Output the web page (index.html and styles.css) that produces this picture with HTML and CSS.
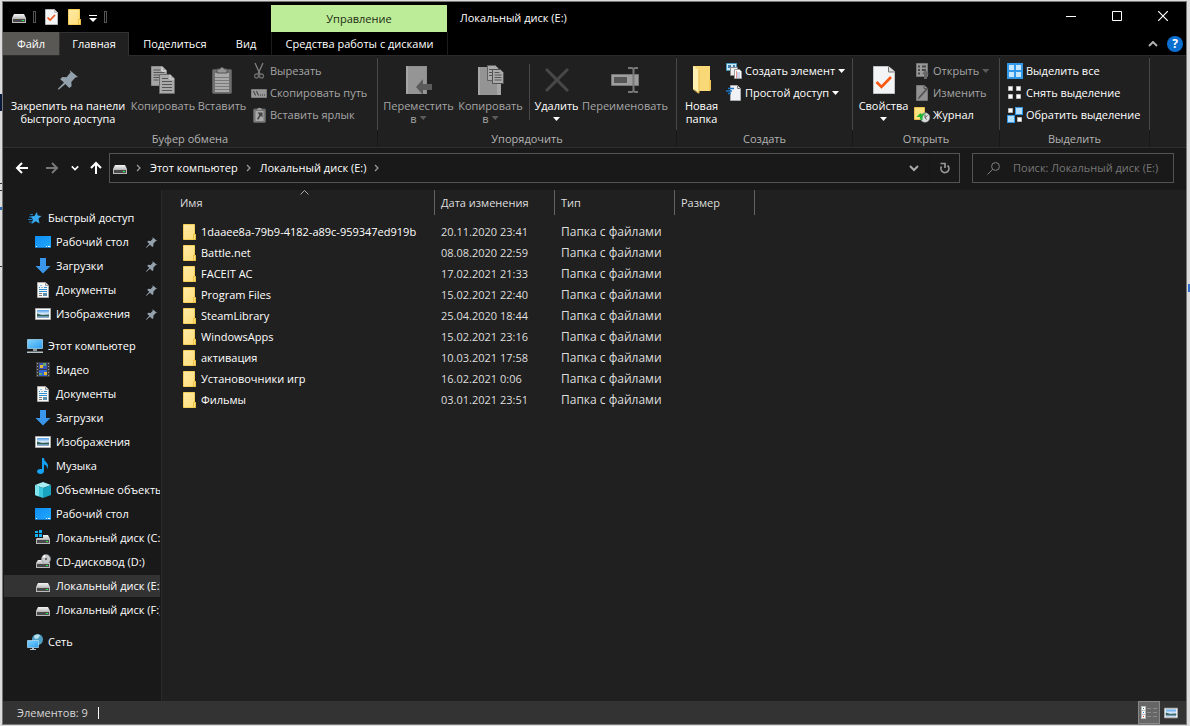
FILE: index.html
```html
<!DOCTYPE html>
<html lang="ru">
<head>
<meta charset="utf-8">
<title>Локальный диск (E:)</title>
<link rel="stylesheet" href="styles.css">
</head>
<body>
<svg class="sprite" width="0" height="0" aria-hidden="true">
  <defs>
    <linearGradient id="g-folder" x1="0" y1="0" x2="1" y2="1"><stop offset="0" stop-color="#ffeaa6"/><stop offset="1" stop-color="#ffdd78"/></linearGradient>
    <linearGradient id="g-blue" x1="0" y1="0" x2="1" y2="1"><stop offset="0" stop-color="#0f8df2"/><stop offset="1" stop-color="#22aaff"/></linearGradient>
    <linearGradient id="g-screen" x1="0" y1="0" x2="1" y2="1"><stop offset="0" stop-color="#7fd4ff"/><stop offset="1" stop-color="#2f9df0"/></linearGradient>
    <linearGradient id="g-photo" x1="0" y1="0" x2="0" y2="1"><stop offset="0" stop-color="#4d9be8"/><stop offset=".5" stop-color="#e4f1fb"/><stop offset=".75" stop-color="#5f87a8"/><stop offset="1" stop-color="#9ab7d6"/></linearGradient>
    <linearGradient id="g-metal" x1="0" y1="0" x2="0" y2="1"><stop offset="0" stop-color="#f4f4f4"/><stop offset="1" stop-color="#c4c4c4"/></linearGradient>
  </defs>
  <symbol id="i-drive" viewBox="0 0 16 16"><path d="M3 5h10l2 4H1z" fill="url(#g-metal)"/><path d="M1 9h14v5H1z" fill="#b9b9b9"/><path d="M2 10h12v3H2z" fill="#484a4c"/><path d="M11 11h2v1h-2z" fill="#2cf04a"/></symbol>
  <symbol id="i-windrive" viewBox="0 0 16 16"><path d="M0 1h3v2H0zM4 0h3v3H4zM0 4h3v3H0zM4 4h3v3H4z" fill="#13b2f5"/><path d="M8 5h5l2 4H1l1-1h6z" fill="url(#g-metal)"/><path d="M1 9h14v5H1z" fill="#b9b9b9"/><path d="M2 10h12v3H2z" fill="#484a4c"/><path d="M11 11h2v1h-2z" fill="#2cf04a"/></symbol>
  <symbol id="i-cd" viewBox="0 0 16 16"><path d="M3 6h10l2 3H1z" fill="url(#g-metal)"/><circle cx="11" cy="5" r="4.500" fill="#c5c9cb" stroke="#8f9496" stroke-width=".6"/><path d="M11 5L7.500 2.500A4.500 4.500 0 0 1 10 .8z" fill="#fff"/><circle cx="11" cy="5" r="1.400" fill="#333" stroke="#eee" stroke-width=".6"/><path d="M1 9h14v5H1z" fill="#b9b9b9"/><path d="M2 10h12v3H2z" fill="#484a4c"/><path d="M11 11h2v1h-2z" fill="#2cf04a"/></symbol>
  <symbol id="i-folder" viewBox="0 0 14 16"><path d="M.5.5h11v10h1v5H.5z" fill="url(#g-folder)" stroke="#f4cf5a"/><path d="M10.500 11.500v-1h2v5h-2z" fill="#ffe27d" stroke="#e6b93a" stroke-width=".8"/></symbol>
  <symbol id="i-props" viewBox="0 0 14 16"><path d="M.5.5h9l3 3v12H.5z" fill="#f4f5f7" stroke="#b7babd"/><path d="M9.500.5v3h3z" fill="#d4d6d9" stroke="#aaa" stroke-width=".6"/><path d="M2.500 8.500l2.600 2.600L10 6" fill="none" stroke="#f2571d" stroke-width="1.700"/></symbol>
  <symbol id="i-pin" viewBox="0 0 20 20"><path d="M11.500 0L20 7l-2.600.6-4.100 4.500.3 4.200-2.300 1.700-4-3.900L1 19.600 0 19.500l.2-1L6 12.400 2.200 9.200l2-2.200 4.300.2 4-4.600z" fill="#93a1ac"/></symbol>
  <symbol id="i-copy" viewBox="0 0 24 28"><path d="M.5.500h11l4 4v15H.5z" fill="#a5a5a5" stroke="#8c8c8c"/><path d="M11 1v4h4" fill="none" stroke="#eee"/><path d="M2.500 4h7M2.500 6.500h11M2.500 9h11M2.500 11.500h11M2.500 14h5" stroke="#555"/><path d="M8.500 8.500h11l4 4v15h-15z" fill="#aaa" stroke="#6a6a6a"/><path d="M19 9v4h4" fill="none" stroke="#ddd"/><path d="M11 12.500h6M11 15.500h10M11 18.500h10M11 21.500h10M11 24.500h10" stroke="#555"/></symbol>
  <symbol id="i-paste" viewBox="0 0 20 28"><rect x=".5" y="3.500" width="19" height="24" rx="1" fill="#707070" stroke="#5a5a5a"/><path d="M3 7h14v19H3z" fill="#aaa"/><path d="M3 11.500h14M3 14.500h14M3 17.500h14M3 20.500h14M3 23.500h14" stroke="#7a7a7a"/><path d="M5 3h3c0-2 4-2 4 0h3v4H5z" fill="#959595" stroke="#555"/></symbol>
  <symbol id="i-cut" viewBox="0 0 16 16"><path d="M4 0l5 11M12 0L7 11" stroke="#818181" stroke-width="1.300" fill="none"/><circle cx="5.500" cy="13" r="2" fill="none" stroke="#6c6c6c" stroke-width="1.300"/><circle cx="10.500" cy="13" r="2" fill="none" stroke="#6c6c6c" stroke-width="1.300"/></symbol>
  <symbol id="i-path" viewBox="0 0 16 16"><path d="M.5 4.500h15v8H.5z" fill="#989898" stroke="#7e7e7e"/><path d="M2.500 6l2 4.500M5.500 6l2 4.500M9 10h1M11 10h1M13 10h1" stroke="#333"/></symbol>
  <symbol id="i-link" viewBox="0 0 16 16"><rect x="2.500" y="2" width="12" height="13.500" rx="1" fill="#777" stroke="#5e5e5e"/><path d="M4.500 4h8v10h-8z" fill="#a9a9a9"/><path d="M6 3c0-3 5-3 5 0z" fill="#999"/><path d="M6.500 5.500h5v5l-1.700-1.700-2.500 4-1.300-.8 2.300-4z" fill="#444"/></symbol>
  <symbol id="i-moveto" viewBox="0 0 28 28"><path d="M1 0h21v28H1z" fill="#8d8d8d"/><path d="M1 0h2v28H1z" fill="#a6a6a6"/><path d="M3 1h18v27H3z" fill="#959595"/><path d="M18 13v5h9v6h-9v5l-7-8z" fill="#5b5b5b"/></symbol>
  <symbol id="i-copyto" viewBox="0 0 28 30"><path d="M1 2h19v28H1z" fill="#949494"/><path d="M1 2h2v28H1zM20 18h4v12h-4z" fill="#a6a6a6"/><path d="M10.500.500h8l3 3v12h-11z" fill="#aaa" stroke="#606060"/><path d="M12 4.500h6M12 7.500h5M12 10.500h4" stroke="#555"/><path d="M15.500 4.500h8l3 3v11h-11z" fill="#aaa" stroke="#505050"/><path d="M17.500 7.500h5M17.500 10h7M17.500 12.500h7M17.500 15h7" stroke="#555"/></symbol>
  <symbol id="i-delete" viewBox="0 0 24 24"><path d="M1 1l22 22M23 1L1 23" stroke="#484848" stroke-width="3"/></symbol>
  <symbol id="i-rename" viewBox="0 0 28 26"><path d="M.5 7.500h27v11H.5z" fill="#9d9d9d" stroke="#777"/><path d="M3 10h13v6H3z" fill="#565656"/><path d="M17 1h4l1.500 1L24 1h3M22.500 2v22M17 25h4l1.500-1 1.500 1h3" fill="none" stroke="#777" stroke-width="2"/></symbol>
  <symbol id="i-newfolder" viewBox="0 0 18 28"><path d="M0 0h17v14l1 1v9l-1 1H5z" fill="#f9d878"/><path d="M0 0l6 4v23l-6-4z" fill="#ffeeb2"/><path d="M6 4v23l-1 0-5-4" fill="none" stroke="#eab94c"/><path d="M16 14h2v10h-2z" fill="#f2c85b"/></symbol>
  <symbol id="i-newitem" viewBox="0 0 16 16"><path d="M.5.500h10v7H.5z" fill="#c9e7f5" stroke="#4796bf"/><path d="M2 2h3v3H2zM7 2h2v3H7z" fill="#3c7eac"/><path d="M4.500 4.500h7v8h-7z" fill="#eee" stroke="#888"/><path d="M8.500 6.500h5l2 2v7h-7z" fill="#fff" stroke="#999"/><path d="M10 10h4M10 12h4M10 14h4" stroke="#95b2e0"/><path d="M10.500 8v7" stroke="#ed8b8b"/></symbol>
  <symbol id="i-easy" viewBox="0 0 16 16"><path d="M4.500.5h7l3 3v12h-10z" fill="#f0f1f4" stroke="#a9adb3"/><path d="M11.500.500v3h3" fill="none" stroke="#777"/><path d="M2 3.500h6M0 6h6M2 8.500h3" stroke="#1976c9" stroke-width="1.500"/></symbol>
  <symbol id="i-propsbig" viewBox="0 0 22 28"><path d="M.5.500h15l6 5v22H.5z" fill="#f3f4f6" stroke="#c2c2c2"/><path d="M15.500.500v5.500h6" fill="#ddd" stroke="#777"/><path d="M3.500 16l5 5L18 11" fill="none" stroke="#f9560f" stroke-width="2.600"/></symbol>
  <symbol id="i-open" viewBox="0 0 16 16"><path d="M2.500.500h11v13h-11z" fill="#999" stroke="#777"/><path d="M4 2.500h2v2H4zM4 6h2v2H4zM4 9.500h2v2H4zM8 2.500h4v2H8zM8 6h4v2H8z" fill="#484848"/><path d="M11.500 7l3.500 4h-2v5h-3v-5H8z" fill="#666"/></symbol>
  <symbol id="i-edit" viewBox="0 0 16 16"><path d="M2.500.500h8l3 3v12h-11z" fill="#929292" stroke="#777"/><path d="M10 .500v3h4" fill="none" stroke="#555"/><path d="M14.500 3.500L6 13l-2 1.500.5-2.500L13 2.500z" fill="#555"/></symbol>
  <symbol id="i-history" viewBox="0 0 16 16"><path d="M.5.500h10v12H.5z" fill="#ffe27d" stroke="#e9c04e"/><circle cx="11" cy="10.500" r="4.800" fill="#dedede" stroke="#8a8a8a" stroke-width=".6"/><path d="M11 7.500v3l2.500-2M11 10.500l1.500 2" stroke="#555" fill="none"/><path d="M2.500 10l4-4 1 1.500C10 6 11 6 12 6.500c-3 1-3.500 3-3.500 7C6 13 6 11 6 10z" fill="#20b535"/></symbol>
  <symbol id="i-selall" viewBox="0 0 16 16"><path d="M0 0h16v16H0z" fill="#3197e8"/><path d="M2 2h5v5H2zM9 2h5v5H9zM2 9h5v5H2zM9 9h5v5H9z" fill="#c4e6ff"/></symbol>
  <symbol id="i-selnone" viewBox="0 0 16 16"><path d="M1.500 1.500h4v4h-4zM9.500 1.500h4v4h-4zM1.500 9.500h4v4h-4zM9.500 9.500h4v4h-4z" fill="#fff" stroke="#b9b9b9"/></symbol>
  <symbol id="i-selinv" viewBox="0 0 16 16"><path d="M1.500 1.500h4v4h-4zM10.500 10.500h4v4h-4z" fill="#fff" stroke="#b9b9b9"/><path d="M8 0h8v8H8zM0 8h8v8H0z" fill="#3197e8"/><path d="M9 1h6v6H9zM1 9h6v6H1z" fill="#b5dfff"/></symbol>
  <symbol id="i-star" viewBox="0 0 16 16"><path d="M10 2l.7 3.600 3.800.4-3 2.600 1 4.900-3.700-2.300L4.500 14l1.400-4.500L3.500 6.400l3.900-.5z" fill="#38aaf2"/><path d="M3 4.500h3M2 7h3M1 9.500h4M2 12h3" stroke="#1b7fc8" stroke-width="1.200"/></symbol>
  <symbol id="i-desktop" viewBox="0 0 16 16"><path d="M0 2h16v12H0z" fill="url(#g-blue)"/><path d="M0 13h16v1H0z" fill="#1477c7"/><path d="M1 12h1v1H1zM11 12h1v1h-1zM13 12h2v1h-2z" fill="#fff"/></symbol>
  <symbol id="i-down" viewBox="0 0 16 16"><path d="M5 0h6v8h4.500L8 15.500.5 8H5z" fill="#3a96ea"/></symbol>
  <symbol id="i-doc" viewBox="0 0 16 16"><path d="M2.500.500h8l3 3v12h-11z" fill="#f7f7f7" stroke="#aaa"/><path d="M10.500.500v3h3" fill="#ddd" stroke="#999"/><path d="M4 5.500h1M5.500 3.500h1M6.500 5.500h1M9 5.500h3M4 7.500h8M4 9.500h8" fill="none" stroke="#2d8bd0"/><path d="M4 11.500h3M4 13.500h3" stroke="#777"/><path d="M8 11h4v3H8z" fill="#5a8fae"/></symbol>
  <symbol id="i-photo" viewBox="0 0 16 16"><path d="M.5 2.500h15v11H.5z" fill="#fff" stroke="#aaa"/><path d="M2 4h12v8H2z" fill="url(#g-photo)"/><path d="M2 7.500l5 1.500 7-.5V10H2z" fill="#315f54"/></symbol>
  <symbol id="i-pc" viewBox="0 0 16 16"><path d="M.5 1.500h15v9H.5z" fill="url(#g-screen)" stroke="#a9dcf7" stroke-width=".7"/><path d="M6 11h4v2H6z" fill="#8b99a3"/><path d="M0 13.500h16V15H0z" fill="#b6c2ca"/></symbol>
  <symbol id="i-video" viewBox="0 0 16 16"><path d="M1 0h14v15H1z" fill="#3c3c3c"/><path d="M4 1h8v6H4z" fill="#3950c0"/><path d="M4 8h8v6H4z" fill="#2f66d4"/><path d="M5 3h3v3H5zM9 10h3v3H9z" fill="#e2b93a"/><path d="M8 1h3v3H8zM4 11h3v2H4z" fill="#63a566"/><path d="M2.500 1v14M13.500 1v14" stroke="#999" stroke-dasharray="1 2"/></symbol>
  <symbol id="i-music" viewBox="0 0 16 16"><path d="M7 0h2c0 4 4 4 4 8 0 1-.5 2.500-1 3 .3-3-1-4-3-4.500V13c0 2-1.500 3-3.500 3S2 15 2 13.500 3.500 11 5 11h2z" fill="#13a0f5"/></symbol>
  <symbol id="i-cube" viewBox="0 0 16 16"><path d="M0 3l8-3 8 3-8 3z" fill="#a8f0f5"/><path d="M0 3l8 3v10l-8-3z" fill="#3ac5dd"/><path d="M8 6l8-3v10l-8 3z" fill="#1aa3bf"/><path d="M0 3l4 1.500v10L0 13z" fill="#7fe3ee"/></symbol>
  <symbol id="i-net" viewBox="0 0 16 16"><circle cx="10.500" cy="5.500" r="5.500" fill="#4f9fc4"/><path d="M7 2c2-2 5-2 6-.5l-2 3-3 .5z" fill="#b7e2ee"/><path d="M.5 6.500h11v7H.5z" fill="url(#g-screen)" stroke="#b3defa" stroke-width=".7"/><path d="M5 14h2v1h2v1H3v-1h2z" fill="#b6c2ca"/></symbol>
  <symbol id="i-details" viewBox="0 0 16 14"><path d="M0 0h5v13H0z" fill="#b9b9b9"/><path d="M1 1h3v3H1zM1 5h3v3H1zM1 9h3v3H1z" fill="#fff"/><path d="M2 2h1v1H2z" fill="#284"/><path d="M2 6h1v1H2z" fill="#37f"/><path d="M2 10h1v1H2z" fill="#e22"/><path d="M6 2.500h4M12 2.500h4M6 6.500h4M12 6.500h4M6 10.500h4M12 10.500h4" stroke="#8b8b8b"/></symbol>
  <symbol id="i-back" viewBox="0 0 14 12"><path d="M13 6H2M7 1L2 6l5 5" fill="none" stroke="currentColor" stroke-width="2"/></symbol>
  <symbol id="i-chev" viewBox="0 0 10 10"><path d="M1 3l4 4 4-4" fill="none" stroke="currentColor" stroke-width="2"/></symbol>
  <symbol id="i-crumb" viewBox="0 0 10 10"><path d="M3 2l3 3-3 3" fill="none" stroke="currentColor" stroke-width="1.300"/></symbol>
</svg>
<div class="window">
  <header class="titlebar">
    <div class="quick">
      <svg class="ico"><use href="#i-drive"/></svg>
      <span class="grip"></span>
      <button class="bare q-props" aria-label="Свойства"><svg width="14" height="16"><use href="#i-props"/></svg></button>
      <button class="bare q-folder" aria-label="Новая папка"><svg width="14" height="16"><use href="#i-folder"/></svg></button>
      <button class="bare q-more" aria-label="Настройка панели"><svg width="8" height="7" viewBox="0 0 8 7"><path d="M0 0h8v1H0zM0 3h8L4 7z" fill="#fff"/></svg></button>
      <span class="grip"></span>
    </div>
    <div class="context-title">Управление</div>
    <h1 class="title">Локальный диск (E:)</h1>
    <div class="controls">
      <button class="bare" aria-label="Свернуть"><svg width="10" height="10"><path d="M0 5.500h10" stroke="#fff"/></svg></button>
      <button class="bare" aria-label="Развернуть"><svg width="10" height="10"><path d="M.5.500h9v9h-9z" stroke="#fff" fill="none"/></svg></button>
      <button class="bare" aria-label="Закрыть"><svg width="10" height="10"><path d="M0 0l10 10M10 0L0 10" stroke="#fff" stroke-width="1.200"/></svg></button>
    </div>
  </header>
  <nav class="tabs">
    <button class="tab file">Файл</button>
    <button class="tab active">Главная</button>
    <button class="tab share">Поделиться</button>
    <button class="tab view">Вид</button>
    <button class="tab context">Средства работы с дисками</button>
    <div class="tab-tools">
      <button class="bare" aria-label="Свернуть ленту"><svg width="10" height="6"><path d="M1 5l4-4 4 4" fill="none" stroke="#b0b0b0" stroke-width="2"/></svg></button>
      <button class="bare help" aria-label="Справка">?</button>
    </div>
  </nav>

  <section class="ribbon">
    <div class="group g-clip">
      <div class="tools">
        <button class="big b-pin"><span class="pic"><svg width="20" height="20"><use href="#i-pin"/></svg></span><span>Закрепить на панели<br>быстрого доступа</span></button>
        <button class="big b-copy" disabled><span class="pic"><svg width="24" height="28"><use href="#i-copy"/></svg></span><span>Копировать</span></button>
        <button class="big b-paste" disabled><span class="pic"><svg width="20" height="28"><use href="#i-paste"/></svg></span><span>Вставить</span></button>
        <div class="stack">
          <button class="small" disabled><svg class="ico"><use href="#i-cut"/></svg>Вырезать</button>
          <button class="small" disabled><svg class="ico"><use href="#i-path"/></svg>Скопировать путь</button>
          <button class="small" disabled><svg class="ico"><use href="#i-link"/></svg>Вставить ярлык</button>
        </div>
      </div>
      <div class="caption">Буфер обмена</div>
    </div>
    <div class="group g-org">
      <div class="tools">
        <button class="big b-move" disabled><span class="pic"><svg width="28" height="28"><use href="#i-moveto"/></svg></span><span>Переместить<br>в<i class="tri"></i></span></button>
        <button class="big b-copyto" disabled><span class="pic"><svg width="28" height="30"><use href="#i-copyto"/></svg></span><span>Копировать<br>в<i class="tri"></i></span></button>
        <span class="inner-sep"></span>
        <button class="big b-del"><span class="pic"><svg width="24" height="24"><use href="#i-delete"/></svg></span><span>Удалить</span><i class="tri"></i></button>
        <button class="big b-ren" disabled><span class="pic"><svg width="28" height="26"><use href="#i-rename"/></svg></span><span>Переименовать</span></button>
      </div>
      <div class="caption">Упорядочить</div>
    </div>
    <div class="group g-new">
      <div class="tools">
        <button class="big b-new"><span class="pic"><svg width="18" height="28"><use href="#i-newfolder"/></svg></span><span>Новая<br>папка</span></button>
        <div class="stack">
          <button class="small"><svg class="ico"><use href="#i-newitem"/></svg>Создать элемент<i class="tri"></i></button>
          <button class="small"><svg class="ico"><use href="#i-easy"/></svg>Простой доступ<i class="tri"></i></button>
        </div>
      </div>
      <div class="caption">Создать</div>
    </div>
    <div class="group g-open">
      <div class="tools">
        <button class="big b-prop"><span class="pic"><svg width="22" height="28"><use href="#i-propsbig"/></svg></span><span>Свойства</span><i class="tri"></i></button>
        <div class="stack">
          <button class="small" disabled><svg class="ico"><use href="#i-open"/></svg>Открыть<i class="tri"></i></button>
          <button class="small" disabled><svg class="ico"><use href="#i-edit"/></svg>Изменить</button>
          <button class="small"><svg class="ico"><use href="#i-history"/></svg>Журнал</button>
        </div>
      </div>
      <div class="caption">Открыть</div>
    </div>
    <div class="group g-sel">
      <div class="tools">
        <div class="stack">
          <button class="small"><svg class="ico"><use href="#i-selall"/></svg>Выделить все</button>
          <button class="small"><svg class="ico"><use href="#i-selnone"/></svg>Снять выделение</button>
          <button class="small"><svg class="ico"><use href="#i-selinv"/></svg>Обратить выделение</button>
        </div>
      </div>
      <div class="caption">Выделить</div>
    </div>
  </section>

  <div class="address">
    <div class="nav">
      <button class="bare" aria-label="Назад"><svg width="14" height="12"><use href="#i-back"/></svg></button>
      <button class="bare fwd" aria-label="Вперед" disabled><svg width="14" height="12"><use href="#i-back"/></svg></button>
      <button class="bare recent" aria-label="Последние расположения"><svg width="8" height="8"><use href="#i-chev"/></svg></button>
      <button class="bare up" aria-label="Вверх"><svg width="14" height="12"><use href="#i-back"/></svg></button>
    </div>
    <div class="path">
      <svg class="ico"><use href="#i-drive"/></svg>
      <svg class="crumb-sep"><use href="#i-crumb"/></svg>
      <a href="#">Этот компьютер</a>
      <svg class="crumb-sep"><use href="#i-crumb"/></svg>
      <a href="#">Локальный диск (E:)</a>
      <svg class="crumb-sep"><use href="#i-crumb"/></svg>
      <button class="bare drop" aria-label="Предыдущие расположения"><svg width="10" height="10"><use href="#i-chev"/></svg></button>
      <button class="bare refresh" aria-label="Обновить"><svg width="12" height="12" viewBox="0 0 12 12"><path d="M8.500 3.500A4 4 0 1 1 2.500 4.500" fill="none" stroke="#999" stroke-width="1.700"/><path d="M1.500 1.500h4.500v4.500" fill="none" stroke="#999" stroke-width="1.700"/></svg></button>
    </div>
    <label class="search">
      <svg width="13" height="13" viewBox="0 0 13 13"><circle cx="8.500" cy="4.500" r="3.900" fill="none" stroke="#808080"/><path d="M5.500 7.500L.5 12.500" stroke="#808080"/></svg>
      <input type="text" placeholder="Поиск: Локальный диск (E:)" aria-label="Поиск">
    </label>
  </div>

  <div class="body">
    <aside class="tree">
      <a class="node root" href="#"><svg class="ico"><use href="#i-star"/></svg>Быстрый доступ</a>
      <a class="node" href="#"><svg class="ico"><use href="#i-desktop"/></svg>Рабочий стол<svg class="pinned"><use href="#i-pin"/></svg></a>
      <a class="node" href="#"><svg class="ico"><use href="#i-down"/></svg>Загрузки<svg class="pinned"><use href="#i-pin"/></svg></a>
      <a class="node" href="#"><svg class="ico"><use href="#i-doc"/></svg>Документы<svg class="pinned"><use href="#i-pin"/></svg></a>
      <a class="node" href="#"><svg class="ico"><use href="#i-photo"/></svg>Изображения<svg class="pinned"><use href="#i-pin"/></svg></a>
      <a class="node root spaced" href="#"><svg class="ico"><use href="#i-pc"/></svg>Этот компьютер</a>
      <a class="node" href="#"><svg class="ico"><use href="#i-video"/></svg>Видео</a>
      <a class="node" href="#"><svg class="ico"><use href="#i-doc"/></svg>Документы</a>
      <a class="node" href="#"><svg class="ico"><use href="#i-down"/></svg>Загрузки</a>
      <a class="node" href="#"><svg class="ico"><use href="#i-photo"/></svg>Изображения</a>
      <a class="node" href="#"><svg class="ico"><use href="#i-music"/></svg>Музыка</a>
      <a class="node" href="#"><svg class="ico"><use href="#i-cube"/></svg>Объемные объекты</a>
      <a class="node" href="#"><svg class="ico"><use href="#i-desktop"/></svg>Рабочий стол</a>
      <a class="node" href="#"><svg class="ico"><use href="#i-windrive"/></svg>Локальный диск (C:)</a>
      <a class="node" href="#"><svg class="ico"><use href="#i-cd"/></svg>CD-дисковод (D:)</a>
      <a class="node current" href="#"><svg class="ico"><use href="#i-drive"/></svg>Локальный диск (E:)</a>
      <a class="node" href="#"><svg class="ico"><use href="#i-drive"/></svg>Локальный диск (F:)</a>
      <a class="node root spaced" href="#"><svg class="ico"><use href="#i-net"/></svg>Сеть</a>
    </aside>
    <main class="files">
      <table>
        <colgroup><col class="c-name"><col class="c-date"><col class="c-type"><col class="c-size"></colgroup>
        <thead><tr><th>Имя<svg class="sort" width="9" height="5"><path d="M.5 4.500l4-4 4 4" fill="none" stroke="#aaa"/></svg></th><th>Дата изменения</th><th>Тип</th><th>Размер</th></tr></thead>
        <tbody>
          <tr><td><span class="name"><svg width="14" height="16"><use href="#i-folder"/></svg>1daaee8a-79b9-4182-a89c-959347ed919b</span></td><td>20.11.2020 23:41</td><td class="type">Папка с файлами</td><td></td></tr>
          <tr><td><span class="name"><svg width="14" height="16"><use href="#i-folder"/></svg>Battle.net</span></td><td>08.08.2020 22:59</td><td class="type">Папка с файлами</td><td></td></tr>
          <tr><td><span class="name"><svg width="14" height="16"><use href="#i-folder"/></svg>FACEIT AC</span></td><td>17.02.2021 21:33</td><td class="type">Папка с файлами</td><td></td></tr>
          <tr><td><span class="name"><svg width="14" height="16"><use href="#i-folder"/></svg>Program Files</span></td><td>15.02.2021 22:40</td><td class="type">Папка с файлами</td><td></td></tr>
          <tr><td><span class="name"><svg width="14" height="16"><use href="#i-folder"/></svg>SteamLibrary</span></td><td>25.04.2020 18:44</td><td class="type">Папка с файлами</td><td></td></tr>
          <tr><td><span class="name"><svg width="14" height="16"><use href="#i-folder"/></svg>WindowsApps</span></td><td>15.02.2021 23:16</td><td class="type">Папка с файлами</td><td></td></tr>
          <tr><td><span class="name"><svg width="14" height="16"><use href="#i-folder"/></svg>активация</span></td><td>10.03.2021 17:58</td><td class="type">Папка с файлами</td><td></td></tr>
          <tr><td><span class="name"><svg width="14" height="16"><use href="#i-folder"/></svg>Установочники игр</span></td><td>16.02.2021 0:06</td><td class="type">Папка с файлами</td><td></td></tr>
          <tr><td><span class="name"><svg width="14" height="16"><use href="#i-folder"/></svg>Фильмы</span></td><td>03.01.2021 23:51</td><td class="type">Папка с файлами</td><td></td></tr>
        </tbody>
      </table>
    </main>
  </div>

  <footer class="status">
    <span class="count">Элементов: 9</span>
    <button class="bare mode on" aria-label="Таблица"><svg width="16" height="14"><use href="#i-details"/></svg></button>
    <button class="bare mode" aria-label="Крупные значки"><svg width="14" height="14"><use href="#i-photo"/></svg></button>
  </footer>
</div>
</body>
</html>
```
FILE: styles.css
```css
* { box-sizing: border-box; }
html, body { height: 100%; }
body {
  margin: 0;
  padding: 1px 3px 1px 2px;
  background:
    linear-gradient(#0b1a3a, #0b1a3a) 0 94px / 2px 17px no-repeat,
    linear-gradient(#333, #333) 0 183px / 2px 1px no-repeat,
    linear-gradient(#333, #333) 0 190px / 2px 1px no-repeat,
    linear-gradient(#2b6cb0, #2b6cb0) 0 207px / 2px 3px no-repeat,
    linear-gradient(#333, #333) 0 266px / 2px 1px no-repeat,
    linear-gradient(#2f6fc4, #2f6fc4) 100% 284px / 2px 8px no-repeat,
    #dcdcdc;
  font: 11px/16px "Open Sans", "Noto Sans", sans-serif;
  color: #fff;
  overflow: hidden;
}
button, input { font: inherit; color: inherit; }
button { margin: 0; padding: 0; border: 0; background: none; white-space: nowrap; }
a { color: inherit; text-decoration: none; }
svg { display: block; flex: none; }
.sprite { position: absolute; }
.ico { width: 16px; height: 16px; }
.bare { display: flex; align-items: center; justify-content: center; }

.window {
  height: 100%;
  display: flex;
  flex-direction: column;
  border: 1px solid #777;
  background: #191919;
}

.titlebar { display: flex; height: 30px; background: #000; }
.quick { display: flex; align-items: center; width: 268px; padding-left: 8px; }
.grip { width: 3px; height: 12px; margin-left: 6px; border: 1px solid #555; }
.q-props { margin-left: 9px; }
.q-folder { margin-left: 9px; }
.q-more { margin-left: 3px; width: 16px; height: 16px; padding-top: 2px; }
.q-more + .grip { margin-left: 3px; }
.context-title { width: 176px; margin-top: 3px; background: #bdec98; color: #1c2b12; line-height: 28px; text-align: center; }
.title { margin: 0; padding-left: 13px; font: inherit; line-height: 31px; flex: 1; }
.controls { display: flex; }
.controls .bare { width: 46px; height: 28px; }

.tabs { display: flex; height: 24px; background: #000; }
.tab { line-height: 23px; border-bottom: 1px solid #2b2b2b; }
.file { width: 56px; background: #595855; }
.active { width: 70px; background: #202020; border: 1px solid #333; border-bottom-color: #202020; line-height: 22px; }
.share { width: 92px; }
.view { width: 50px; }
.context { width: 177px; border-left: 1px solid #1c1c1c; border-right: 1px solid #1c1c1c; }
.tab-tools { flex: 1; display: flex; justify-content: flex-end; align-items: center; gap: 9px; padding-right: 3px; border-bottom: 1px solid #2b2b2b; }
.help { width: 16px; height: 16px; border-radius: 50%; background: #0b6fd0; font-size: 12px; font-weight: 700; }

.ribbon { display: flex; height: 92px; background: #202020; border-bottom: 1px solid #303030; }
.group { position: relative; display: flex; flex-direction: column; padding-top: 4px; border-right: 1px solid #181818; }
.group::after { content: ""; position: absolute; right: -1px; top: 2px; width: 1px; height: 72px; background: #484848; }
.g-clip { width: 375px; }
.g-org { width: 299px; }
.g-new { width: 176px; }
.g-open { width: 147px; }
.g-sel { width: 150px; }
.tools { display: flex; height: 71px; }
.caption { text-align: center; color: #b4b4b4; }
.big { display: flex; flex-direction: column; align-items: center; line-height: 13px; }
.pic { display: flex; align-items: center; justify-content: center; width: 32px; height: 39px; }
.big:disabled, .small:disabled { color: #a6a6a6; }
.b-pin { width: 130px; }
.b-copy { width: 60px; }
.b-paste { width: 58px; }
.stack { display: flex; flex-direction: column; align-items: flex-start; }
.small { display: flex; align-items: center; height: 22px; gap: 3px; }
.tri { flex: none; width: 7px; height: 4px; background: currentColor; clip-path: polygon(0 0, 100% 0, 50% 100%); }
:disabled .tri { opacity: .45; }
.big > .tri { margin-top: 5px; }
.big span .tri { display: inline-block; margin: 0 0 3px 3px; }
.b-move { width: 81px; }
.b-copyto { width: 63px; }
.inner-sep { width: 1px; height: 56px; margin: 4px 0 0 7px; background: #484848; }
.b-del { width: 53px; }
.b-ren { width: 84px; }
.b-new { width: 49px; }
.b-prop { width: 61px; }
.g-sel .stack { padding-left: 7px; }

.address { display: flex; align-items: center; height: 42px; padding: 0 12px 2px 0; }
.nav { display: flex; align-items: center; width: 106px; padding-left: 12px; color: #fff; }
.fwd { margin-left: 16px; color: #777; transform: scaleX(-1); }
.recent { margin-left: 12px; }
.up { margin-left: 10px; transform: rotate(90deg); }
.path { flex: 1; display: flex; align-items: center; height: 30px; padding-left: 2px; border: 1px solid #535353; }
.crumb-sep { width: 10px; height: 10px; margin: 0 6px; color: #999; }
.drop { margin-left: auto; width: 30px; height: 28px; color: #aaa; }
.refresh { width: 30px; height: 28px; border-left: 1px solid #151515; }
.search { display: flex; align-items: center; width: 202px; height: 30px; margin-left: 12px; padding-left: 14px; border: 1px solid #535353; }
.search input { flex: 1; min-width: 0; margin-left: 13px; padding: 0; border: 0; background: none; outline: 0; }
.search input::placeholder { color: #777; opacity: 1; }

.body { flex: 1; display: flex; min-height: 0; }
.tree { width: 157px; padding-top: 16px; overflow: hidden; }
.node { display: flex; align-items: center; height: 24px; margin-left: 1px; padding-left: 31px; gap: 5px; white-space: nowrap; border: solid #191919; border-width: 1px 0; }
.node.root { padding-left: 23px; }
.node.spaced { margin-top: 8px; }
.current { background: #333; }
.pinned { width: 11px; height: 11px; margin-left: auto; margin-right: 3px; }
.files { flex: 1; margin-left: 1px; border-left: 1px solid #2a2a2a; background: #202020; overflow: hidden; }
table { border-collapse: separate; border-spacing: 0; table-layout: fixed; width: 593px; }
.c-name { width: 273px; }
.c-date, .c-type { width: 120px; }
.c-size { width: 80px; }
th { height: 25px; padding: 0 0 0 6px; border-right: 1px solid #636363; text-align: left; font-weight: 400; color: #dedede; }
th:first-child { position: relative; padding-left: 18px; }
.sort { position: absolute; left: 138px; top: 0; }
tbody::before { content: ""; display: block; height: 6px; }
td { height: 21px; padding: 0 0 0 6px; line-height: 16px; color: #dedede; }
td:first-child { padding-left: 21px; color: #fff; }
td.type { font-size: 12px; }
.name { display: flex; align-items: center; gap: 4px; white-space: nowrap; }

.status { display: flex; align-items: center; height: 23px; padding: 0 4px 0 14px; background: #333; }
.count { margin-right: auto; padding-right: 10px; border-right: 1px solid #fff; line-height: 12px; color: #d6d6d6; }
.mode { width: 22px; height: 23px; }
.mode.on { background: #666; border: 1px solid #888; }
```
